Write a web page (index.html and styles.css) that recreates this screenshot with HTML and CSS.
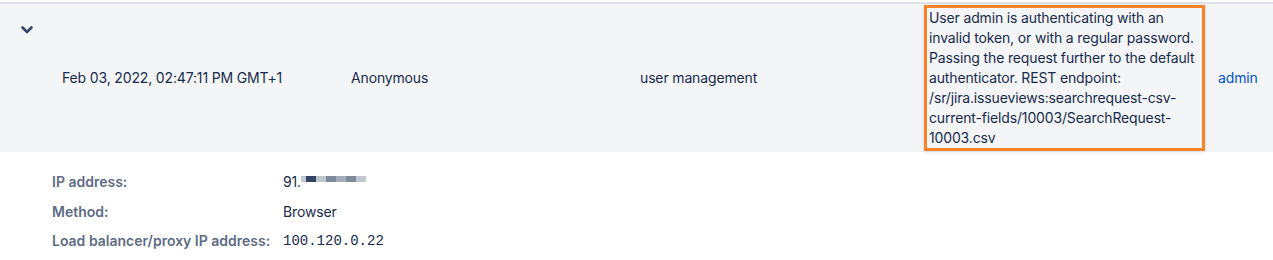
FILE: index.html
```html
<!DOCTYPE html>
<html lang="en">
<head>
    <meta charset="UTF-8">
    <title>Audit log</title>
    <link rel="stylesheet" href="styles.css">
</head>
<body>
    <div class="log">
        <div class="log-row">
            <div class="cell cell-toggle">
                <svg class="chevron" width="14" height="10" viewBox="0 0 14 10">
                    <path d="M2.5 2.5 L7 7 L11.5 2.5" fill="none" stroke="#344563" stroke-width="2.6" stroke-linecap="round" stroke-linejoin="round"/>
                </svg>
            </div>
            <div class="cell">Feb 03, 2022, 02:47:11 PM GMT+1</div>
            <div class="cell">Anonymous</div>
            <div class="cell">user management</div>
            <div class="cell cell-message">
                <div class="highlight">User admin is authenticating with an invalid token, or with a regular password. Passing the request further to the default authenticator. REST endpoint: /sr/jira.issueviews:searchrequest-csv-current-fields/10003/SearchRequest-10003.csv</div>
            </div>
            <div class="cell"><a href="#" class="user-link">admin</a></div>
        </div>

        <!-- 상세 정보 -->
        <div class="details">
            <div class="detail-row">
                <div class="detail-label">IP address:</div>
                <div class="detail-value">
                    91.<span class="blur">
                        <span class="px p1 half"></span><span class="px p2"></span><span class="px p1"></span><span class="px p3"></span><span class="px p4"></span><span class="px p3"></span><span class="px p1"></span>
                    </span>
                </div>
            </div>
            <div class="detail-row">
                <div class="detail-label">Method:</div>
                <div class="detail-value">Browser</div>
            </div>
            <div class="detail-row">
                <div class="detail-label">Load balancer/proxy IP address:</div>
                <div class="detail-value mono">100.120.0.22</div>
            </div>
        </div>
    </div>
</body>
</html>
```

FILE: styles.css
```css
body {
    margin: 0;
    padding-top: 2px;
    font-family: Inter, "Noto Sans", sans-serif;
    font-size: 14px;
    letter-spacing: -0.15px;
    color: #172b4d;
    background-color: #fff;
}

.log-row {
    display: grid;
    grid-template-columns: 54px repeat(4, 289px) 1fr;
    align-items: center;
    min-height: 148px;
    background-color: #f4f5f7;
    border-top: 2px solid #dfe1e6;
}

.cell {
    padding: 0 8px;
    line-height: 20px;
}

.cell-toggle {
    align-self: start;
    padding: 21px 0 0 20px;
}

.chevron {
    display: block;
}

.cell-message {
    padding: 0 5px 0 3px;
}

.highlight {
    border: 3px solid #f7822a;
    padding: 0 3px 0 2px;
    box-shadow: 0 1px 4px rgba(0, 0, 0, 0.12);
}

.user-link {
    color: #0052cc;
    text-decoration: none;
}

.details {
    padding: 20px 0 0 52px;
}

.detail-row {
    display: flex;
    line-height: 20px;
    margin-bottom: 9.5px;
}

.detail-label {
    width: 231px;
    font-weight: 600;
    letter-spacing: 0;
    color: #5e6c84;
}

.detail-value {
    display: flex;
    align-items: flex-start;
}

.mono {
    font-family: "Liberation Mono", "DejaVu Sans Mono", monospace;
    letter-spacing: 0;
}

.blur {
    display: flex;
    margin-top: 4px;
}

.px {
    display: block;
    width: 10px;
    height: 6px;
}

.px.half {
    width: 5px;
}

.p1 { background-color: #c1c7d0; }
.p2 { background-color: #344563; }
.p3 { background-color: #7f8a9c; }
.p4 { background-color: #a5adba; }
```
